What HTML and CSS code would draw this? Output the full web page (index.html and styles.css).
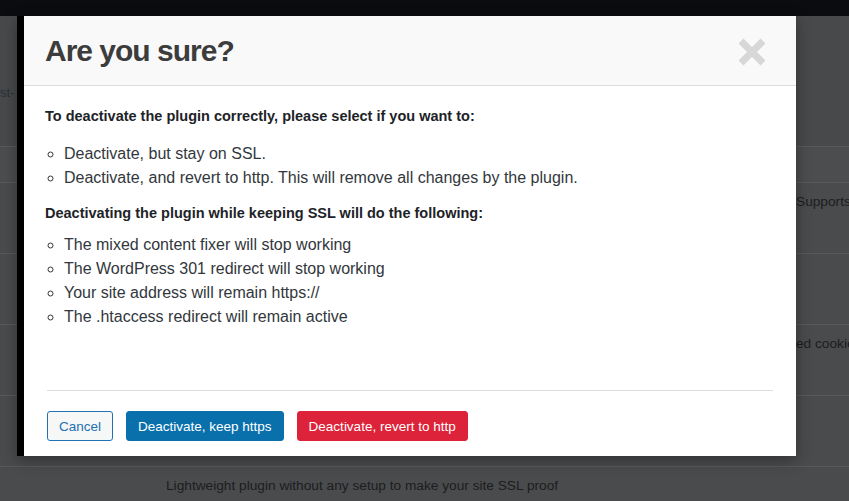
FILE: index.html
```html
<!DOCTYPE html>
<html lang="en">
  <head>
    <meta charset="UTF-8" />
    <meta name="viewport" content="width=device-width, initial-scale=1.0" />
    <title>Plugins - Deactivate</title>
    <link rel="stylesheet" href="styles.css">
  </head>
  <body>
    <div class="adminbar"></div>

    <div class="plugins">
      <div class="plugins-head">
        <span class="crumb">st-</span>
      </div>
      <div class="plugin-row short"></div>
      <div class="plugin-row">
        <span></span><span></span><span class="desc">Supports</span>
      </div>
      <div class="plugin-row"></div>
      <div class="plugin-row">
        <span></span><span></span><span class="desc">ed cookie</span>
      </div>
      <div class="plugin-row"></div>
      <div class="plugin-row last">
        <span></span><span class="desc">Lightweight plugin without any setup to make your site SSL proof</span>
      </div>
    </div>

    <div class="modal">
      <div class="modal-header">
        <h2>Are you sure?</h2>
        <span class="close">
          <svg width="28" height="28" viewBox="0 0 28 28">
            <path d="M3 3 L25 25 M25 3 L3 25" stroke="#d7d7d7" stroke-width="7" fill="none" />
          </svg>
        </span>
      </div>

      <div class="modal-body">
        <p class="lead">To deactivate the plugin correctly, please select if you want to:</p>
        <ul class="first">
          <li>Deactivate, but stay on SSL.</li>
          <li>Deactivate, and revert to http. This will remove all changes by the plugin.</li>
        </ul>
        <p class="lead second">Deactivating the plugin while keeping SSL will do the following:</p>
        <ul class="last">
          <li>The mixed content fixer will stop working</li>
          <li>The WordPress 301 redirect will stop working</li>
          <li>Your site address will remain https://</li>
          <li>The .htaccess redirect will remain active</li>
        </ul>
      </div>

      <div class="modal-footer">
        <button class="button button-cancel">Cancel</button>
        <button class="button button-primary">Deactivate, keep https</button>
        <button class="button button-danger">Deactivate, revert to http</button>
      </div>
    </div>
  </body>
</html>
```

FILE: styles.css
```css
body {
  margin: 0;
  font-family: "Liberation Sans", Arial, sans-serif;
  background-color: #4a4b4c;
  overflow: hidden;
  height: 501px;
}
.adminbar {
  height: 16px;
  background-color: #0b0c0f;
}
.plugins-head {
  height: 130px;
  background-color: #48494a;
  display: flex;
  align-items: center;
  padding-top: 22px;
  box-sizing: border-box;
}
.crumb {
  font-size: 13px;
  color: #26323d;
}
.plugin-row {
  height: 71px;
  border-top: 1px solid #58595a;
  display: grid;
  grid-template-columns: 166px 630px 1fr;
  font-size: 13.7px;
  color: #1c1d1f;
  padding-top: 11px;
  box-sizing: border-box;
}
.plugin-row.short {
  height: 36px;
  background-color: #4c4d4e;
}
.plugin-row.last {
  height: 34px;
}
.desc {
  white-space: nowrap;
  overflow: hidden;
}

.modal {
  position: absolute;
  top: 16px;
  left: 17px;
  width: 779px;
  height: 440px;
  box-sizing: border-box;
  border-left: 7px solid #000;
  background-color: #fff;
  box-shadow: 0 4px 14px rgba(0, 0, 0, 0.35);
  display: flex;
  flex-direction: column;
}
.modal-header {
  height: 70px;
  box-sizing: border-box;
  background-color: #f9f9fa;
  border-bottom: 1px solid #dcdcde;
  display: flex;
  align-items: center;
  justify-content: space-between;
  padding: 0 30px 0 21px;
}
.modal-header h2 {
  margin: 0;
  font-size: 30px;
  letter-spacing: -1px;
  color: #3c3c3c;
}
.close {
  display: flex;
  margin-top: 2px;
}
.modal-body {
  flex: 1;
  padding: 0 21px;
  font-size: 16px;
  color: #32373c;
}
.lead {
  margin: 20px 0 0;
  line-height: 20px;
  font-size: 14.5px;
  font-weight: bold;
  color: #1d2327;
}
.lead.second {
  margin-top: 13px;
}
ul {
  list-style: circle;
  margin: 16px 0 0;
  padding-left: 19px;
}
ul.last {
  margin-top: 10px;
}
li {
  line-height: 24px;
}
.modal-footer {
  margin: 0 23px;
  border-top: 1px solid #dcdcde;
  padding: 20px 0 15px;
  display: flex;
  gap: 13px;
}
.button {
  height: 30px;
  padding: 0 11px;
  font-family: "Liberation Sans", Arial, sans-serif;
  font-size: 13.5px;
  border-radius: 3px;
  border: 1px solid transparent;
  color: #fff;
  cursor: pointer;
}
.button-cancel {
  background-color: #f6f7f7;
  border-color: #2271b1;
  color: #2271b1;
}
.button-primary {
  background-color: #0a70ab;
  border-color: #0a70ab;
}
.button-danger {
  background-color: #dd2339;
  border-color: #dd2339;
}
```
